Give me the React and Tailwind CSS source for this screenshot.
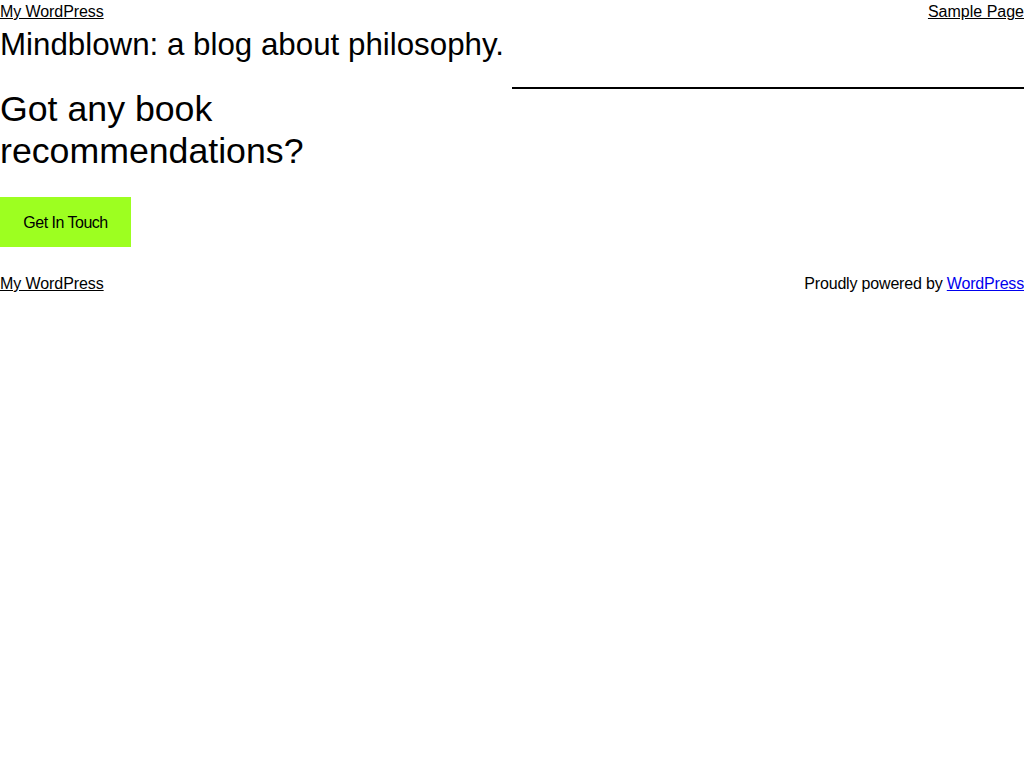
export default function App() {
  return (
    <div className="min-h-screen bg-white text-black font-['Liberation_Sans',Arial,sans-serif] text-base">
      <header className="flex items-start justify-between h-[24px]">
        <a href="#" className="underline leading-[24px] tracking-[-0.08px]">My WordPress</a>
        <a href="#" className="underline leading-[24px]">Sample Page</a>
      </header>
      <h1 className="mt-[1px] text-[31.3px] leading-[40px]">Mindblown: a blog about philosophy.</h1>
      <main className="flex mt-[23px]">
        <div className="w-1/2">
          <h2 className="text-[35.7px] leading-[42px]">Got any book recommendations?</h2>
          <a href="#" className="mt-[25px] inline-block bg-[#9dff20] w-[131px] text-center pt-[14px] pb-[12px] leading-[24px] tracking-[-0.5px]">Get In Touch</a>
        </div>
        <div className="w-1/2">
          <hr className="-mt-[1px] border-t-2 border-black" />
        </div>
      </main>
      <footer className="mt-[25px] flex justify-between">
        <a href="#" className="underline leading-[24px] tracking-[-0.08px]">My WordPress</a>
        <p className="leading-[24px] tracking-[-0.18px]">Proudly powered by <a href="#" className="underline text-[#0000ee]">WordPress</a></p>
      </footer>
    </div>
  );
}
